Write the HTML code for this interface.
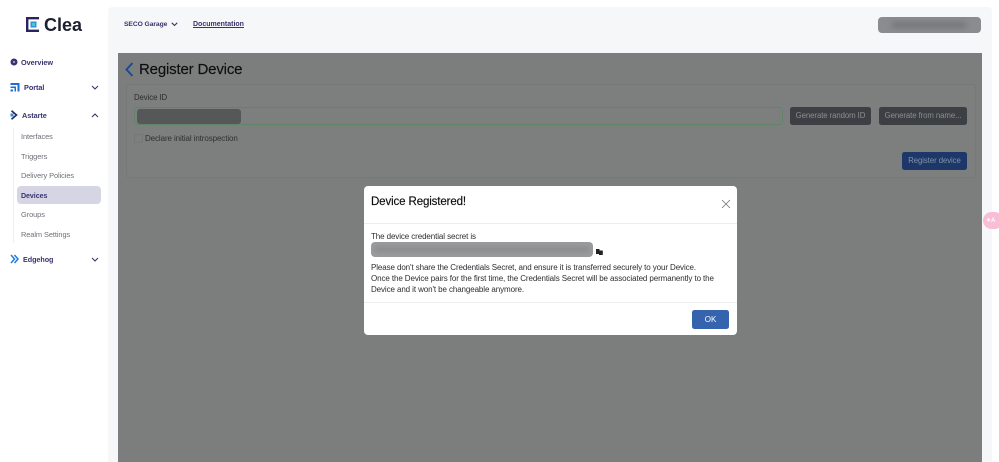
<!DOCTYPE html>
<html><head><meta charset="utf-8"><style>
html,body{margin:0;padding:0;width:999px;height:462px;overflow:hidden;background:#fff}
body{font-family:"Liberation Sans",sans-serif;position:relative}
.a{position:absolute;white-space:nowrap}
.nav{color:#37346f;font-weight:bold;font-size:7.300px;letter-spacing:-.05px;line-height:10px}
.sub{color:#6d7078;font-size:7.400px;letter-spacing:-.07px;line-height:10px}
svg{position:absolute;overflow:visible}
.btn{position:absolute;border-radius:2.500px;color:#8b8e91;font-size:7.800px;letter-spacing:-.08px;text-align:center}
.blur{position:absolute;border-radius:4px}
.m{color:#2b2d30;font-size:8px;letter-spacing:-.1px;line-height:11px}
</style></head><body>
<div style="position:absolute;left:0;top:0;width:999px;height:462px;filter:blur(.25px)">
<div class="a" style="left:108px;top:7px;width:884px;height:455px;background:#f6f7f9;border-radius:4px 4px 0 0"></div>
<div class="a" style="left:118px;top:53px;width:864px;height:409px;background:#7c7e7d"></div>

<!-- logo -->
<svg style="left:26px;top:17px" width="14" height="15" viewBox="0 0 14 15"><path d="M13 1.200H1.200V13.800H13" fill="none" stroke="#27245f" stroke-width="2.400"/><rect x="4.500" y="4.500" width="6" height="6" fill="#2f8fe0"/><rect x="6" y="6" width="3" height="3" fill="#3fd0c0"/></svg>
<div class="a" style="left:44px;top:14px;font-size:18px;font-weight:bold;line-height:23px;color:#1c2030">Clea</div>

<!-- sidebar -->
<svg style="left:10px;top:58px" width="8" height="8" viewBox="0 0 8 8"><circle cx="4" cy="4" r="3.500" fill="#37346f"/><circle cx="4" cy="4" r="1" fill="#b9b8d0"/></svg>
<div class="a nav" style="left:21px;top:58px">Overview</div>
<svg style="left:10px;top:82px" width="10" height="10" viewBox="0 0 10 10"><path d="M.5 1H9.500V9.500H7.500V3H.5ZM.5 4.500H6V9.500H4.500V6H.5ZM.5 7.500H3V9.500H.5Z" fill="#1f6fd0"/></svg>
<div class="a nav" style="left:24px;top:82.500px">Portal</div>
<svg style="left:91px;top:85px" width="8" height="5" viewBox="0 0 8 5"><path d="M1 1L4 4L7 1" fill="none" stroke="#37346f" stroke-width="1.100"/></svg>
<svg style="left:10px;top:110px" width="8" height="10" viewBox="0 0 8 10"><path d="M1.500 .8L6.500 5L1.500 9.200" fill="none" stroke="#27245f" stroke-width="1.600"/><path d="M.5 3.500H3.500V6.500H.5Z" fill="#2a8fe0"/></svg>
<div class="a nav" style="left:22px;top:110.500px">Astarte</div>
<svg style="left:91px;top:113px" width="8" height="5" viewBox="0 0 8 5"><path d="M1 4L4 1L7 4" fill="none" stroke="#37346f" stroke-width="1.100"/></svg>
<div class="a" style="left:13px;top:128px;width:1px;height:115px;background:#eeeef2"></div>
<div class="a sub" style="left:21px;top:131.500px">Interfaces</div>
<div class="a sub" style="left:21px;top:151.500px">Triggers</div>
<div class="a sub" style="left:21px;top:170.500px">Delivery Policies</div>
<div class="a" style="left:17px;top:186px;width:84px;height:18px;background:#d6d5e4;border-radius:4px"></div>
<div class="a sub" style="left:21px;top:190.500px;color:#37346f;font-weight:bold;font-size:7.100px">Devices</div>
<div class="a sub" style="left:21px;top:209.500px">Groups</div>
<div class="a sub" style="left:21px;top:229.500px">Realm Settings</div>
<svg style="left:10px;top:254px" width="9" height="10" viewBox="0 0 9 10"><path d="M1 1L4.500 5L1 9M4.500 1L8 5L4.500 9" fill="none" stroke="#1f7be0" stroke-width="1.500"/></svg>
<div class="a nav" style="left:23px;top:254.500px;font-size:7.200px">Edgehog</div>
<svg style="left:91px;top:257px" width="8" height="5" viewBox="0 0 8 5"><path d="M1 1L4 4L7 1" fill="none" stroke="#37346f" stroke-width="1.100"/></svg>

<!-- top bar -->
<div class="a nav" style="left:124px;top:19.500px;font-size:6.700px">SECO Garage</div>
<svg style="left:171px;top:22px" width="7" height="5" viewBox="0 0 7 5"><path d="M.8 .8L3.500 3.500L6.200 .8" fill="none" stroke="#37346f" stroke-width="1.100"/></svg>
<div class="a nav" style="left:193px;top:19.500px;font-size:7px;letter-spacing:0;text-decoration:underline">Documentation</div>
<div class="blur" style="left:878px;top:17px;width:103px;height:16px;background:#8b8c90;overflow:hidden"><div style="position:absolute;left:14px;top:5px;width:74px;height:6px;background:#74757a;filter:blur(3px)"></div></div>

<!-- page -->
<svg style="left:125px;top:62px" width="9" height="15" viewBox="0 0 9 15"><path d="M7.500 1L1.500 7.500L7.500 14" fill="none" stroke="#1f4a8c" stroke-width="2"/></svg>
<div class="a" style="left:139px;top:60px;font-size:15px;letter-spacing:-.17px;line-height:19px;color:#0d0e10;-webkit-text-stroke:.15px #0d0e10">Register Device</div>
<div class="a" style="left:126px;top:84px;width:848px;height:92px;background:#7d7f7e;border:1px solid #777978;border-radius:3px"></div>
<div class="a" style="left:134px;top:93px;font-size:7.800px;letter-spacing:-.08px;line-height:10px;color:#2b2c2e">Device ID</div>
<div class="a" style="left:134px;top:107px;width:647px;height:16px;border:1px solid #5f8566;border-radius:3px;background:#7d7f7e"></div>
<div class="blur" style="left:137px;top:108.500px;width:104px;height:15px;background:#555759;border-radius:3px"></div>
<div class="a" style="left:134px;top:134px;width:7px;height:7px;border:1px solid #767877;border-radius:2px"></div>
<div class="a" style="left:145px;top:133.500px;font-size:8px;letter-spacing:-.1px;line-height:10px;color:#2f3032">Declare initial introspection</div>
<div class="btn" style="left:790px;top:107px;width:81px;height:18px;line-height:18px;background:#3c3f43">Generate random ID</div>
<div class="btn" style="left:879px;top:107px;width:88px;height:18px;line-height:18px;background:#3c3f43">Generate from name...</div>
<div class="btn" style="left:902px;top:152px;width:65px;height:18px;line-height:18px;background:#1d3768;color:#8492a8">Register device</div>

<!-- translate bubble -->
<div class="a" style="left:983px;top:212px;width:20px;height:17px;border-radius:9px;background:#f9bdd6"></div>
<div class="a" style="left:986px;top:213.500px;font-size:6px;line-height:14px;font-weight:bold;color:#fff">✦A</div>

<!-- modal -->
<div class="a" style="left:364px;top:186px;width:373px;height:149px;background:#fff;border-radius:4px"></div>
<div class="a" style="left:364px;top:223px;width:373px;height:1px;background:#ecedee"></div>
<div class="a" style="left:364px;top:302px;width:373px;height:1px;background:#ecedee"></div>
<div class="a" style="left:371px;top:194.500px;font-size:11.500px;letter-spacing:-.12px;line-height:15px;color:#0c0d0f;-webkit-text-stroke:.15px #0c0d0f">Device Registered!</div>
<svg style="left:722px;top:200px" width="8" height="8" viewBox="0 0 8 8"><path d="M0 0L8 8M8 0L0 8" stroke="#6e7073" stroke-width=".8"/></svg>
<div class="a m" style="left:371px;top:231px">The device credential secret is</div>
<div class="blur" style="left:371px;top:242px;width:222px;height:15px;background:#9a9b9c;overflow:hidden"><div style="position:absolute;left:4px;top:5px;width:214px;height:5px;background:#8a8b8c;filter:blur(2.500px)"></div></div>
<svg style="left:596px;top:249px" width="7" height="6" viewBox="0 0 7 6"><path d="M0 0H3.500V5H0ZM3 1.500H6.800V6H3Z" fill="#222"/></svg>
<div class="a m" style="left:371px;top:262px">Please don't share the Credentials Secret, and ensure it is transferred securely to your Device.</div>
<div class="a m" style="left:371px;top:273px">Once the Device pairs for the first time, the Credentials Secret will be associated permanently to the</div>
<div class="a m" style="left:371px;top:284px">Device and it won't be changeable anymore.</div>
<div class="btn" style="left:692px;top:310px;width:37px;height:19px;line-height:19px;background:#3563ad;color:#fff;font-size:8px">OK</div>
</div>
</body></html>
